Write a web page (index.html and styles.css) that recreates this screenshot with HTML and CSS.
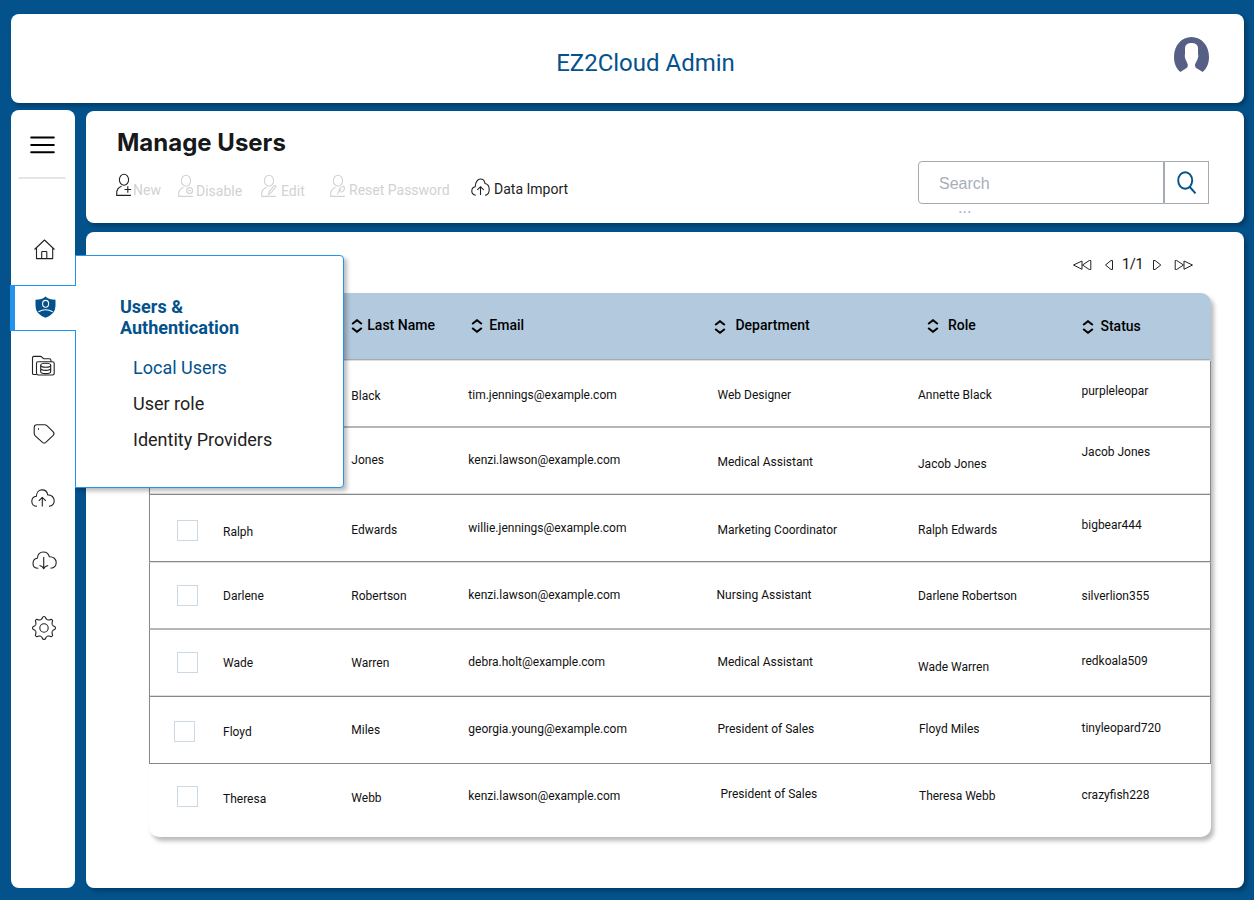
FILE: index.html
```html
<!DOCTYPE html>
<html lang="en">
<head>
<meta charset="utf-8">
<title>EZ2Cloud Admin</title>
<link rel="stylesheet" href="styles.css">
</head>
<body>
<svg class="defs" width="0" height="0">
  <symbol id="sort" viewBox="0 0 12 14"><path d="M1.2 5 6 1.2 10.8 5M1.2 9 6 12.8 10.8 9" fill="none" stroke="#000" stroke-width="2"/></symbol>
  <symbol id="person" viewBox="0 0 16 24"><ellipse cx="8" cy="6.7" rx="4.6" ry="5.5"/><path d="M5.5 13.2C2.5 14.4.7 16.8.7 20v2.4h14.2"/></symbol>
</svg>
<header class="topbar panel">
  <h1 class="brand">EZ2Cloud Admin</h1>
  <svg class="avatar" width="36" height="36" viewBox="1174 37 36 36"><path fill="#566084" d="M1180.3 72C1176 68.5 1174 63 1174 57c0-11.500 7.500-20 17.500-20s17.500 8.500 17.500 20c0 6-2 11.500-6.300 15l-6.900-4.200q-1-1.300-.8-3.300l2.600-5.500q1.400-3.500.4-5v-5.500q0-5.500-6.500-5.500t-6.500 5.500v5.500q-.8 1.500.4 5l2.400 5.500q.2 2-.8 3.300z"/></svg>
</header>
<div class="layout">
  <nav class="sidebar">
    <div class="nav-menu"><svg width="64" height="104" viewBox="11 110 64 104"><path d="M31.200 137.500h22.600M31.200 144.900h22.600M31.200 152.300h22.600" stroke="#000" stroke-width="2" stroke-linecap="round"/><path d="M18.500 178h47" stroke="#dcdcdc" stroke-width="1.300"/></svg></div>
    <a class="nav-item"><svg width="64" height="71" viewBox="11 214 64 71"><path d="M34.500 249.500 44.500 240l10 9.500M36.500 248v10.600h16.200V248M41.700 258.500v-6.300q0-.7.7-.7h3.700q.7 0 .7.700v6.300"/></svg></a>
    <div class="nav-active">
      <a class="nav-face"><svg width="66" height="44" viewBox="10 286 66 44"><path fill="#04528c" stroke="none" d="M45.500 296.500q3.500 3.200 10 3.300v6.200q0 8-10 11.700-10-3.700-10-11.700v-6.200q6.500-.1 10-3.300z"/><ellipse cx="45.600" cy="303.800" rx="3" ry="3.400" stroke="#fff"/><path d="M38.500 311.700q7-4 14.200 0" stroke="#fff"/></svg></a>
      <div class="flyout">
        <h2>Users &amp;<br>Authentication</h2>
        <a class="current">Local Users</a>
        <a>User role</a>
        <a>Identity Providers</a>
      </div>
    </div>
    <a class="nav-item"><svg width="64" height="69" viewBox="11 331 64 69"><path d="M36.500 374.500h-2.700q-1.300 0-1.300-1.300v-15.500q0-1.300 1.300-1.300h6.500q1 0 2 1.100l1.200 1.200h5.800q1.700 0 1.700 1.700v1.400"/><path d="M38 361.800h14.500q1.700 0 1.700 1.700v9.800q0 1.700-1.700 1.700H38.200q-1.700 0-1.700-1.700v-9.800q0-1.700 1.500-1.700z"/><ellipse cx="45.700" cy="365.300" rx="5" ry="2"/><path d="M40.700 365.300v6.200c0 2.800 10 2.800 10 0v-6.200M40.700 368.300c0 2.700 10 2.700 10 0"/></svg></a>
    <a class="nav-item"><svg width="64" height="67" viewBox="11 400 64 67"><path d="M37 424.700h7.600q1.300 0 2.300.9l6.300 6.200q1.600 1.800 0 3.500l-7.400 7q-1.600 1.400-3.300 0l-7-6.200q-1.300-1.100-1.300-2.800v-5.800q0-2.800 2.800-2.800z"/><path d="M38.500 428v2" stroke-width=".8"/></svg></a>
    <a class="nav-item"><svg width="64" height="63" viewBox="11 467 64 63"><path d="M37 506.300c-3.500 0-5.200-2.500-5.200-4.800 0-3 2-5 4.600-5.300 0-4 2.600-6.300 5.600-6.300 3.300 0 5.300 2.200 5.700 5 3.800-.1 6.500 2.500 6.500 5.800 0 3-2 5.200-5.200 5.600M42.300 506.500v-9M38.800 500.800l3.500-3.400 3.500 3.400"/></svg></a>
    <a class="nav-item"><svg width="64" height="64" viewBox="11 530 64 64"><path d="M38.300 568.300c-3.500 0-5.300-2.300-5.300-4.900 0-2.900 2-4.800 4.300-5.100.4-4 3-6.300 6-6.300 3.200 0 5.300 2.100 6 4.700 4-.2 6.900 2.400 6.900 5.700 0 3-2.300 5.500-5.700 5.900M43.700 557v11.800M39.500 565.500q3.200.5 4.200 3.300 1-2.800 4.500-3.300"/></svg></a>
    <a class="nav-item"><svg width="64" height="68" viewBox="11 594 64 68"><defs><path id="tooth" d="M-3.400-8.200C-2.400-8.900-1.900-9.200-1.700-10Q-1.300-11.500 0-11.500 1.300-11.500 1.700-10C1.900-9.200 2.400-8.900 3.400-8.200"/></defs><g transform="translate(44 628)"><use href="#tooth"/><use href="#tooth" transform="rotate(45)"/><use href="#tooth" transform="rotate(90)"/><use href="#tooth" transform="rotate(135)"/><use href="#tooth" transform="rotate(180)"/><use href="#tooth" transform="rotate(225)"/><use href="#tooth" transform="rotate(270)"/><use href="#tooth" transform="rotate(315)"/><circle r="4.200"/></g></svg></a>
  </nav>
  <main class="main">
    <section class="toolbar panel">
      <div class="tools">
        <h2 class="title">Manage Users</h2>
        <div class="actions">
          <button class="act act-new"><svg width="16" height="24"><use href="#person"/><path d="M11.800 13.200v6.600M8.500 16.500h6.600"/></svg><span>New</span></button>
          <button class="act act-disable"><svg width="16" height="24"><use href="#person"/><circle cx="11.600" cy="16.600" r="3"/><path d="M10 16.600h3.200"/></svg><span>Disable</span></button>
          <button class="act act-edit"><svg width="16" height="24"><use href="#person"/><path d="M7.500 20.300l.8-3 4.900-5.600q1.300-.8 1.800 1l-4.900 6z"/></svg><span>Edit</span></button>
          <button class="act act-reset"><svg width="16" height="24"><use href="#person"/><path d="M7.500 20.300q1-3 3.500-5M9 16.500q.5-3.500 4.800-4.300 1.500 2.800-.8 5.200-1.500 1-3 .4"/></svg><span>Reset Password</span></button>
          <button class="act act-import"><svg width="19" height="19" viewBox="0 0 19 19"><path d="M4.800 17.300C2.300 17 .8 15.200.8 13c0-2.300 1.400-3.900 3.400-4.300C4.400 4 6.700 1 9.300 1c2.700 0 4.400 1.900 4.700 4.500 2.500.5 4.200 2.700 4.200 6 0 3.200-1.500 5.400-4.200 5.800M9.500 17V9M6.300 11.800 9.500 8.700l3.200 3.100"/></svg><span>Data Import</span></button>
        </div>
      </div>
      <div class="search">
        <div class="search-row">
          <div class="search-input">Search</div>
          <button class="search-btn"><svg width="22" height="26" viewBox="0 0 22 26"><ellipse cx="9.200" cy="10.500" rx="7" ry="8.200"/><path d="M13.800 17l5.700 6.300"/></svg></button>
        </div>
        <div class="more">...</div>
      </div>
    </section>
    <section class="content panel">
      <div class="pager">
        <svg width="20" height="12" viewBox="0 0 20 12"><path d="M10 2 1.500 6 10 10.300zM18.800 1.500h-1.500L10.500 6l6.800 4.500h1.500z"/></svg>
        <svg width="10" height="12" viewBox="0 0 10 12"><path d="M8.500 1.500H7L1.500 6 7 10.500h1.500z"/></svg>
        <span>1/1</span>
        <svg width="10" height="12" viewBox="0 0 10 12"><path d="M1.500 1.500H3L8.800 6 3 10.500H1.500z"/></svg>
        <svg width="20" height="12" viewBox="0 0 20 12"><path d="M1.200 1.500h1.500L9.500 6l-6.800 4.500H1.200zM10 2l8.500 4-8.500 4.300z"/></svg>
      </div>
      <div class="table">
        <div class="row head">
          <span></span><span class="h"></span>
          <span class="h"><svg width="12" height="14"><use href="#sort"/></svg>Last Name</span>
          <span class="h h-email"><svg width="12" height="14"><use href="#sort"/></svg>Email</span>
          <span class="h h-dept"><svg width="12" height="14"><use href="#sort"/></svg>Department</span>
          <span class="h h-role"><svg width="12" height="14"><use href="#sort"/></svg>Role</span>
          <span class="h h-status"><svg width="12" height="14"><use href="#sort"/></svg>Status</span>
        </div>
        <div class="row even"><i class="check d22"></i><span class="d26">Tim</span><span class="d27">Black</span><span class="d26">tim.jennings@example.com</span><span class="d26">Web Designer</span><span class="d26">Annette Black</span><span class="d22">purpleleopar</span></div>
        <div class="row"><i class="check d22"></i><span class="d24">Jacob</span><span class="d24">Jones</span><span class="d24">kenzi.lawson@example.com</span><span class="d26">Medical Assistant</span><span class="d28">Jacob Jones</span><span class="d16">Jacob Jones</span></div>
        <div class="row tall"><i class="check d25"></i><span class="d29">Ralph</span><span class="d27">Edwards</span><span class="d25">willie.jennings@example.com</span><span class="d27">Marketing Coordinator</span><span class="d27">Ralph Edwards</span><span class="d22">bigbear444</span></div>
        <div class="row even"><i class="check d22"></i><span class="d25">Darlene</span><span class="d25">Robertson</span><span class="d24">kenzi.lawson@example.com</span><span class="d24 left1">Nursing Assistant</span><span class="d25">Darlene Robertson</span><span class="d25">silverlion355</span></div>
        <div class="row"><i class="check d22"></i><span class="d25">Wade</span><span class="d25">Warren</span><span class="d24">debra.holt@example.com</span><span class="d24">Medical Assistant</span><span class="d29">Wade Warren</span><span class="d23">redkoala509</span></div>
        <div class="row crisp"><i class="check d24 left3"></i><span class="d27">Floyd</span><span class="d25">Miles</span><span class="d24">georgia.young@example.com</span><span class="d24">President of Sales</span><span class="d24 right1">Floyd Miles</span><span class="d23">tinyleopard720</span></div>
        <div class="row last"><i class="check d22"></i><span class="d27">Theresa</span><span class="d26">Webb</span><span class="d24">kenzi.lawson@example.com</span><span class="d22 right3">President of Sales</span><span class="d24 right1">Theresa Webb</span><span class="d23">crazyfish228</span></div>
      </div>
    </section>
  </main>
</div>
</body>
</html>
```
FILE: styles.css
```css
* { box-sizing: border-box; }
body { margin: 0; width: 1254px; height: 900px; overflow: hidden; padding: 14px 10px 12px 11px; background: #04528c; font-family: Roboto, "Liberation Sans", sans-serif; color: #111; }
svg { display: block; flex: none; }
.defs { position: absolute; }
h1, h2 { margin: 0; }
button { margin: 0; padding: 0; border: 0; background: none; font: inherit; color: inherit; }
.panel { background: #fff; border-radius: 8px; box-shadow: 3px 3px 4px rgba(0, 0, 0, .28); }

.topbar { display: grid; grid-template-columns: 1fr auto 1fr; height: 89px; padding: 23px 34px 0 0; }
.brand { grid-column: 2; margin: 12px 0 0 70px; font-weight: 400; font-size: 24px; line-height: 28px; color: #04528c; }
.avatar { justify-self: end; }

.layout { display: flex; gap: 11px; margin-top: 7px; height: 778px; }
.sidebar { width: 64px; background: #fff; border-radius: 8px; }
.sidebar svg { fill: none; stroke: #222; stroke-width: 1.1; stroke-linejoin: round; }
.nav-item, .nav-menu { display: block; }
.nav-active { position: relative; width: 66px; height: 46px; margin-left: -1px; }
.nav-face { position: relative; z-index: 3; display: block; height: 46px; background: #fff; border-top: 1px solid #2493eb; border-bottom: 1px solid #2493eb; box-shadow: inset 5px 0 #2493eb; }
.flyout { position: absolute; z-index: 2; left: 65px; top: -30px; width: 269px; height: 233px; padding: 40px 0 0 44px; background: #fff; border: 1px solid #2493eb; border-radius: 0 4px 4px 0; box-shadow: 3px 3px 4px rgba(0, 0, 0, .27); }
.flyout h2 { font-size: 18px; line-height: 21px; font-weight: 700; color: #04528c; margin-bottom: 12px; }
.flyout a { display: block; margin-left: 13px; font-size: 18px; line-height: 36px; color: #222; }
.flyout .current { color: #04528c; }

.main { width: 1158px; display: flex; flex-direction: column; gap: 9px; padding-top: 1px; }
.toolbar { display: flex; justify-content: space-between; height: 112px; padding: 0 35px 0 30px; }
.title { margin: 17px 0 0 1px; font: 700 24px/30px Inter, sans-serif; color: #16181a; }
.actions { display: flex; align-items: flex-start; padding-top: 15px; }
.act { display: flex; align-items: flex-start; font-size: 14px; line-height: 16px; color: #d2d2d2; white-space: nowrap; }
.act svg { fill: none; stroke: #d2d2d2; stroke-width: 1.1; }
.act span { margin-top: 9px; }
.act-new { width: 62px; }
.act-new svg { stroke: #222; }
.act-new span { margin-left: 1px; }
.act-disable { width: 83px; padding-top: 1px; }
.act-disable span { margin-left: 2px; }
.act-edit { width: 69px; padding-top: 1px; }
.act-edit span { margin-left: 4px; }
.act-reset { width: 141px; padding-top: 1px; }
.act-reset span { margin: 8px 0 0 3px; }
.act-import { color: #222; padding-top: 5px; }
.act-import svg { stroke: #222; }
.act-import span { margin: 3px 0 0 4px; }

.search { padding-top: 50px; }
.search-row { display: flex; }
.search-input { width: 246px; height: 43px; padding: 12px 20px; border: 1px solid #a6abb1; border-radius: 4px 0 0 4px; font: 16px/20px "Liberation Sans", Arial, sans-serif; color: #a9adb8; }
.search-btn { width: 45px; height: 43px; padding-left: 11px; border: 1px solid #a6abb1; }
.search-btn svg { fill: none; stroke: #04528c; stroke-width: 1.9; }
.more { margin: -4px 0 0 40px; font: 16px/16px "Liberation Sans", Arial, sans-serif; color: #a9adb8; }

.content { height: 656px; padding-left: 63px; }
.pager { display: flex; align-items: center; height: 61px; padding: 3px 0 0 923px; font-size: 14.5px; color: #111; }
.pager svg { fill: none; stroke: #222; stroke-width: 1; margin-top: 2px; }
.pager svg:nth-child(2) { margin-left: 12px; }
.pager span { margin: 0 9px 0 8px; width: 21px; letter-spacing: -.3px; }
.pager svg:nth-child(5) { margin-left: 12px; }

.table { width: 1062px; height: 544px; background: #fff; border-radius: 10px; box-shadow: 3px 4px 4px rgba(0, 0, 0, .27); font-size: 12px; line-height: 16px; color: #111; }
.row { display: grid; grid-template-columns: 73px 128.3px 117px 249.2px 200.5px 163.5px 1fr; align-items: start; height: 67px; border: 1px solid #888; border-top: 0; box-shadow: inset 0 -1px #ddd; white-space: nowrap; }
.row.even { border-bottom-color: #b6b6b6; box-shadow: inset 0 -1px #b6b6b6; }
.row.tall { height: 68px; border-bottom-color: #ddd; box-shadow: inset 0 -1px #888; }
.row.crisp { box-shadow: none; }
.row.last { height: 73px; border-color: transparent; box-shadow: none; }
.row.head { height: 68px; background: #b3c9dd; border-color: transparent; border-bottom-color: #ddd; border-radius: 10px 10px 0 0; box-shadow: inset 0 -1px #aaa; font-size: 14px; font-weight: 500; color: #000; }
.h { display: flex; gap: 4px; margin-top: 24px; }
.h svg { margin-top: 2px; }
.h-email { gap: 6px; margin-left: 3px; }
.h-dept { gap: 9px; margin-left: -3px; }
.h-dept svg { margin-top: 3px; }
.h-role { gap: 9px; margin-left: 9px; }
.h-status { gap: 6px; margin: 25px 0 0 1px; }
.check { width: 21px; height: 21px; margin-left: 27px; border: 1px solid #ccd9e5; }
.left3 { margin-left: 24px; }
.left1 { margin-left: -1px; }
.right1 { margin-left: 1px; }
.right3 { margin-left: 3px; }
.d16 { margin-top: 16px; }
.d22 { margin-top: 22px; }
.d23 { margin-top: 23px; }
.d24 { margin-top: 24px; }
.d25 { margin-top: 25px; }
.d26 { margin-top: 26px; }
.d27 { margin-top: 27px; }
.d28 { margin-top: 28px; }
.d29 { margin-top: 29px; }
```
